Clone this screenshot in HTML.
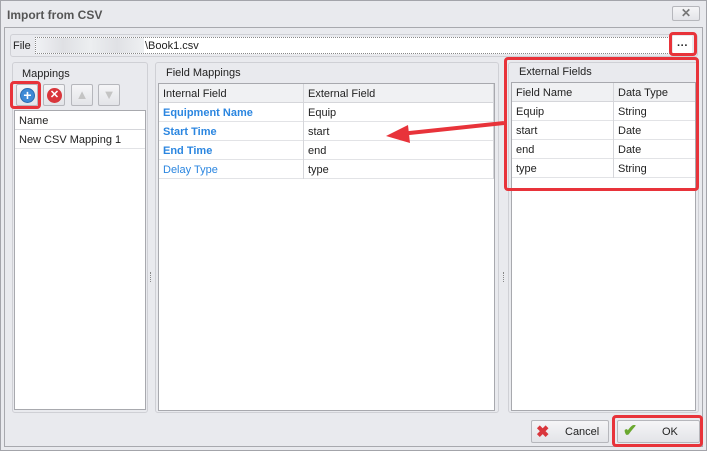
<!DOCTYPE html><html><head><style>
*{box-sizing:border-box;margin:0;padding:0}
body{width:707px;height:451px;background:#b9bac0;font-family:"Liberation Sans",sans-serif;font-size:11px;color:#222;position:relative;overflow:hidden}
.a{position:absolute}
.win{left:0;top:0;width:707px;height:451px;background:#e9eaee;border:1px solid #a3a4aa}
.title{left:7px;top:8px;font-weight:bold;font-size:12px;color:#555}
.frame{left:4px;top:27px;width:699px;height:420px;border:1px solid #a8a9ae;background:#e9eaee}
.grp{border:1px solid #cfd0d5;border-radius:3px;background:#e9eaee}
.grid{background:#fff;border:1px solid #a8a9ae}
.row{position:absolute;left:0;right:0;height:19px;border-bottom:1px solid #e2e3e6;line-height:21px;padding-left:4px}
.hd{background:#f0f1f3;border-bottom:1px solid #d5d6da}
.blue{color:#2b86e0;font-weight:bold}
.btn{border:1px solid #b6b7bc;border-radius:2px;background:linear-gradient(#f5f5f7,#e3e4e8)}
.red{border:3px solid #e8333a;border-radius:4px}
</style></head><body>
<div class="a win"></div>
<div class="a title">Import from CSV</div>
<div class="a btn" style="left:672px;top:6px;width:28px;height:15px;text-align:center;line-height:13px;color:#777;font-weight:bold;font-size:12px">✕</div>
<div class="a frame"></div>
<div class="a grp" style="left:10px;top:34px;width:688px;height:23px"></div>
<div class="a" style="left:13px;top:40px">File</div>
<div class="a" style="left:35px;top:37px;width:635px;height:17px;background:#fff;border:1px dotted #888"></div>
<div class="a" style="left:36px;top:38px;width:108px;height:15px;background:linear-gradient(90deg,#f0f1f4,#dfe0e4,#eceef0,#e0e1e5,#eef0f2)"></div>
<div class="a" style="left:145px;top:40px">\Book1.csv</div>
<div class="a" style="left:673px;top:36px;width:19px;height:17px;background:#fff;text-align:center;font-weight:bold;line-height:20px">···</div>
<div class="a red" style="left:669px;top:32px;width:28px;height:24px"></div>
<div class="a grp" style="left:12px;top:62px;width:136px;height:351px"></div>
<div class="a" style="left:22px;top:68px">Mappings</div>
<div class="a btn" style="left:16px;top:84px;width:22px;height:22px"><div class="a" style="left:3px;top:3px;width:15px;height:15px;border-radius:50%;background:#3d8ad6;border:1px solid #2a6bb0;color:#fff;text-align:center;line-height:12px;font-weight:bold;font-size:14px">+</div></div>
<div class="a red" style="left:10px;top:81px;width:31px;height:28px"></div>
<div class="a btn" style="left:43px;top:84px;width:22px;height:22px"><div class="a" style="left:3px;top:3px;width:15px;height:15px;border-radius:50%;background:#d9363c;color:#fff;text-align:center;line-height:14px;font-weight:bold;font-size:11px">✕</div></div>
<div class="a btn" style="left:71px;top:84px;width:22px;height:22px;color:#c4c4c4;text-align:center;line-height:20px;font-size:13px">▲</div>
<div class="a btn" style="left:98px;top:84px;width:22px;height:22px;color:#c4c4c4;text-align:center;line-height:20px;font-size:13px">▼</div>
<div class="a grid" style="left:14px;top:110px;width:132px;height:300px">
<div class="row hd" style="top:0;background:#fff;border-bottom:1px solid #d5d6da">Name</div>
<div class="row" style="top:19px">New CSV Mapping 1</div></div>
<div class="a" style="left:150px;top:272px;width:2px;height:10px;border-left:1px dotted #888"></div>
<div class="a grp" style="left:155px;top:62px;width:344px;height:351px"></div>
<div class="a" style="left:166px;top:67px">Field Mappings</div>
<div class="a grid" style="left:158px;top:83px;width:337px;height:328px">
<div class="row hd" style="top:0">Internal Field</div>
<div class="row blue" style="top:19px">Equipment Name</div>
<div class="row blue" style="top:38px">Start Time</div>
<div class="row blue" style="top:57px">End Time</div>
<div class="row" style="top:76px;color:#2b86e0">Delay Type</div>
<div class="a" style="left:144px;top:0;height:95px;border-left:1px solid #d5d6da"></div>
<div class="a" style="left:149px;top:4px">External Field</div>
<div class="a" style="left:149px;top:23px">Equip</div>
<div class="a" style="left:149px;top:42px">start</div>
<div class="a" style="left:149px;top:61px">end</div>
<div class="a" style="left:149px;top:80px">type</div>
<div class="a" style="right:0;top:0;width:1px;height:95px;background:#d5d6da"></div>
</div>
<div class="a" style="left:503px;top:272px;width:2px;height:10px;border-left:1px dotted #888"></div>
<div class="a grp" style="left:508px;top:62px;width:191px;height:351px"></div>
<div class="a" style="left:519px;top:66px">External Fields</div>
<div class="a grid" style="left:511px;top:82px;width:185px;height:329px">
<div class="row hd" style="top:0">Field Name</div>
<div class="row" style="top:19px">Equip</div>
<div class="row" style="top:38px">start</div>
<div class="row" style="top:57px">end</div>
<div class="row" style="top:76px">type</div>
<div class="a" style="left:101px;top:0;height:95px;border-left:1px solid #d5d6da"></div>
<div class="a" style="left:106px;top:4px">Data Type</div>
<div class="a" style="left:106px;top:23px">String</div>
<div class="a" style="left:106px;top:42px">Date</div>
<div class="a" style="left:106px;top:61px">Date</div>
<div class="a" style="left:106px;top:80px">String</div>
</div>
<div class="a red" style="left:504px;top:57px;width:195px;height:134px"></div>
<svg class="a" style="left:380px;top:110px" width="130" height="40"><line x1="124" y1="13" x2="20" y2="24" stroke="#e8333a" stroke-width="4"/><polygon points="6,26 28,15 30,33" fill="#e8333a"/></svg>
<div class="a btn" style="left:531px;top:420px;width:78px;height:23px"><span class="a" style="left:4px;top:1px;color:#d9363c;font-size:16px;font-weight:bold">✖</span><span class="a" style="left:33px;top:5px">Cancel</span></div>
<div class="a btn" style="left:617px;top:420px;width:83px;height:23px"><span class="a" style="left:5px;top:0px;color:#6aa82f;font-size:17px;font-weight:bold">✔</span><span class="a" style="left:44px;top:5px">OK</span></div>
<div class="a red" style="left:612px;top:415px;width:91px;height:32px"></div>
</body></html>
